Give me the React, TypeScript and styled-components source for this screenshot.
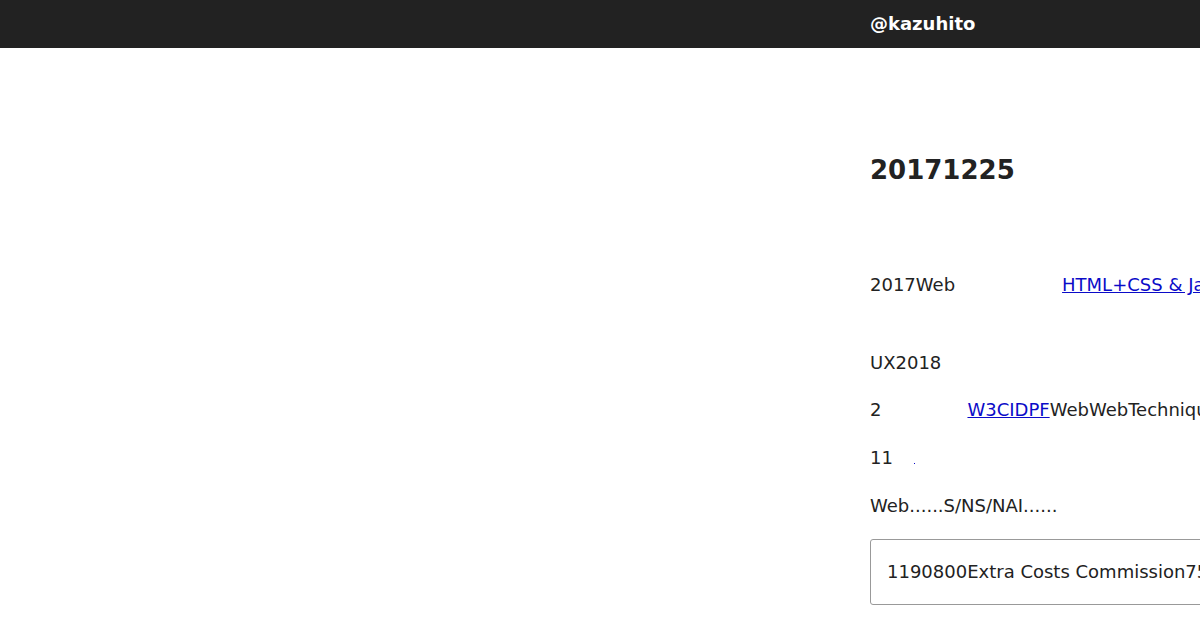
import React from 'react';
import styled, { createGlobalStyle } from 'styled-components';

const GlobalStyle = createGlobalStyle`
  html, body {
    margin: 0;
    padding: 0;
    overflow: hidden;
    background: #fff;
  }

  body {
    font-family: 'DejaVu Sans', 'Noto Sans CJK JP', sans-serif;
    color: #222;
  }
`;

const Header = styled.header`
  height: 48px;
  background-color: #222;
`;

const Inner = styled.div`
  width: 700px;
  margin-left: 870px;
`;

const UserName = styled.a`
  display: block;
  color: #fff;
  font-size: 18px;
  font-weight: bold;
  line-height: 48px;
  text-decoration: none;
  white-space: nowrap;
`;

const Article = styled.main`
  padding: 104px 0 40px;
`;

const Title = styled.h1`
  margin: 0 0 82px;
  font-size: 26px;
  font-weight: bold;
  line-height: 1.4;
`;

const Paragraph = styled.p`
  margin: 0 0 18px;
  font-size: 18px;
  line-height: 1.65;
  white-space: nowrap;
`;

const Blank = styled.span<{ $w: number }>`
  display: inline-block;
  width: ${(p) => p.$w}px;
`;

const Link = styled.a`
  color: #0b0bc8;
  text-decoration: underline;
`;

const Dot = styled.a`
  display: inline-block;
  width: 1px;
  height: 1px;
  vertical-align: baseline;
  background-color: #0b0bc8;
`;

const Note = styled.div`
  margin: 0;
  padding: 17px 16px;
  border: 1px solid #999;
  border-radius: 3px;
  font-size: 18px;
  line-height: 30px;
  white-space: nowrap;
`;

const App = () => {
  return (
    <>
      <GlobalStyle />
      <Header>
        <Inner>
          <UserName href='#'>@kazuhito</UserName>
        </Inner>
      </Header>
      <Article>
        <Inner>
          <Title>20171225</Title>
          <Paragraph>
            2017Web<Blank $w={107} />
            <Link href='#'>HTML+CSS &amp; JavaScript</Link>
            <br />
            {'\u00a0'}
          </Paragraph>
          <Paragraph>UX2018</Paragraph>
          <Paragraph>
            2<Blank $w={86} />
            <Link href='#'>W3CIDPF</Link>WebWebTechniques
          </Paragraph>
          <Paragraph>
            11<Blank $w={21} />
            <Dot href='#' />
          </Paragraph>
          <Paragraph>Web......S/NS/NAI......</Paragraph>
          <Note>1190800Extra Costs Commission75,000</Note>
        </Inner>
      </Article>
    </>
  );
};

export default App;
